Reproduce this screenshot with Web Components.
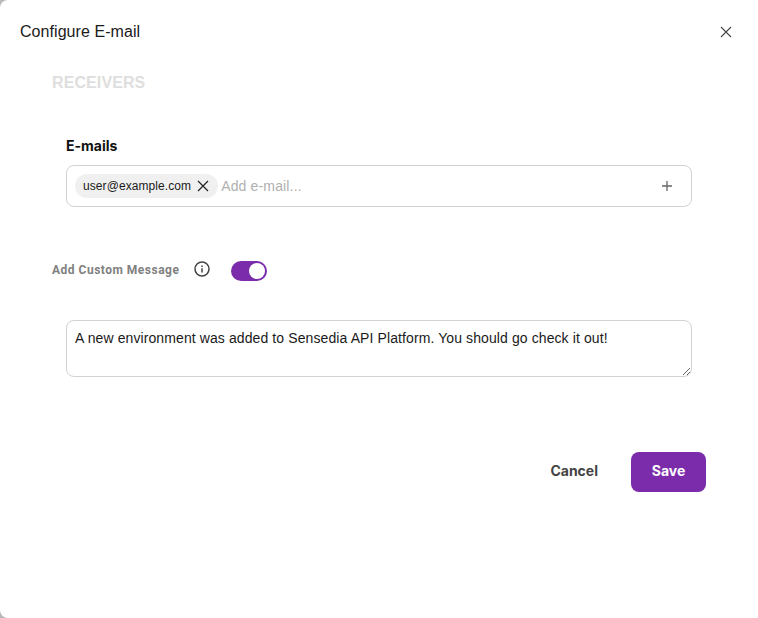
<!DOCTYPE html>
<html lang="en">
<head>
<meta charset="utf-8">
<title>Configure E-mail</title>
<style>
  html, body { margin: 0; height: 100%; overflow: hidden; background: #b9b9b9; }
  body { font-family: "Liberation Sans", Arial, sans-serif; }
</style>
</head>
<body>
<config-dialog heading="Configure E-mail">
  <section-title>RECEIVERS</section-title>
  <email-field label="E-mails" placeholder="Add e-mail...">
    <email-chip>user@example.com</email-chip>
  </email-field>
  <message-toggle label="Add Custom Message" checked></message-toggle>
  <message-box>A new environment was added to Sensedia API Platform. You should go check it out!</message-box>
  <dialog-actions></dialog-actions>
</config-dialog>

<script>
// shorthand to make a shadow root from a string
function shadow(el, html) {
  const root = el.attachShadow({ mode: 'open' });
  root.innerHTML = html;
  return root;
}

const ICON_X = (size, color, width) => `
  <svg width="${size}" height="${size}" viewBox="0 0 12 12" fill="none" stroke="${color}" stroke-width="${width}">
    <path d="M1 1 11 11M11 1 1 11"/>
  </svg>`;

class ConfigDialog extends HTMLElement {
  connectedCallback() {
    shadow(this, `
      <style>
        :host {
          display: block;
          height: 618px;
          background: #fff;
          border-radius: 8px 0 0 8px;
          box-sizing: border-box;
          color: #1a1a1a;
        }
        header {
          display: flex;
          justify-content: space-between;
          align-items: center;
          height: 18px;
          padding: 23px 26px 0 20px;
        }
        h1 {
          margin: 0;
          font: 400 16px/18px "Liberation Sans", Arial, sans-serif;
          letter-spacing: 0.06px;
        }
        button {
          display: flex;
          padding: 0;
          border: 0;
          background: none;
        }
        main { padding: 33px 0 0 52px; width: 654px; }
      </style>
      <header>
        <h1>${this.getAttribute('heading')}</h1>
        <button aria-label="Close">${ICON_X(12, '#444', 1.1)}</button>
      </header>
      <main><slot></slot></main>
    `);
  }
}

class SectionTitle extends HTMLElement {
  connectedCallback() {
    shadow(this, `
      <style>
        :host {
          display: block;
          font: 700 16px/18px "Liberation Sans", Arial, sans-serif;
          letter-spacing: 0.1px;
          color: #dedede;
        }
      </style>
      <slot></slot>
    `);
  }
}

class EmailChip extends HTMLElement {
  connectedCallback() {
    shadow(this, `
      <style>
        :host {
          display: inline-flex;
          align-items: center;
          gap: 6px;
          height: 24px;
          padding: 0 9px 0 8px;
          border-radius: 12px;
          background: #f0f0f0;
          font: 400 12px "Liberation Sans", Arial, sans-serif;
          letter-spacing: 0.08px;
          color: #1a1a1a;
        }
        svg { display: block; }
      </style>
      <slot></slot>
      ${ICON_X(12, '#222', 1.2)}
    `);
  }
}

class EmailField extends HTMLElement {
  connectedCallback() {
    shadow(this, `
      <style>
        :host {
          display: block;
          margin: 46px 14px 0 14px;
        }
        label {
          display: block;
          margin-bottom: 11px;
          font: 700 14px/16px Inter, "Liberation Sans", sans-serif;
          color: #111;
        }
        .box {
          display: flex;
          align-items: center;
          height: 42px;
          box-sizing: border-box;
          padding: 0 19px 0 8px;
          border: 1px solid #d2d2d2;
          border-radius: 8px;
        }
        input {
          flex: 1;
          min-width: 0;
          margin-left: 3px;
          padding: 0;
          border: 0;
          outline: 0;
          font: 400 14px "Liberation Sans", Arial, sans-serif;
          letter-spacing: 0.15px;
          color: #1a1a1a;
        }
        input::placeholder { color: #b0b0b0; opacity: 1; }
        svg { display: block; }
      </style>
      <label>${this.getAttribute('label')}</label>
      <div class="box">
        <slot></slot>
        <input placeholder="${this.getAttribute('placeholder')}">
        <svg width="10" height="10" viewBox="0 0 10 10" stroke="#666" stroke-width="1.3" fill="none">
          <path d="M5 0V10M0 5H10"/>
        </svg>
      </div>
    `);
  }
}

class MessageToggle extends HTMLElement {
  connectedCallback() {
    shadow(this, `
      <style>
        :host {
          display: flex;
          align-items: center;
          margin-top: 53px;
          height: 22px;
        }
        span.text {
          margin-top: -2px;
          font: 700 12px/14px Roboto, "Liberation Sans", sans-serif;
          letter-spacing: 0.5px;
          color: #808080;
        }
        svg { display: block; margin: -4px 0 0 15px; }
        .switch {
          position: relative;
          width: 36px;
          height: 20px;
          margin-left: 21px;
          border-radius: 10px;
          background: #7b2cab;
        }
        .knob {
          position: absolute;
          top: 2px;
          right: 2px;
          width: 16px;
          height: 16px;
          border-radius: 50%;
          background: #fff;
        }
      </style>
      <span class="text">${this.getAttribute('label')}</span>
      <svg width="16" height="16" viewBox="0 0 16 16" fill="none" stroke="#444" stroke-width="1.5">
        <circle cx="8" cy="8" r="7"/>
        <path d="M8 7.2V11.6"/>
        <path d="M8 4.4V5.9"/>
      </svg>
      <div class="switch" role="switch" aria-checked="true"><div class="knob"></div></div>
    `);
  }
}

class MessageBox extends HTMLElement {
  connectedCallback() {
    const text = this.textContent;
    shadow(this, `
      <style>
        :host {
          display: block;
          margin: 38px 14px 0 14px;
        }
        textarea {
          display: block;
          width: 100%;
          height: 57px;
          box-sizing: border-box;
          padding: 9px 8px;
          border: 1px solid #d2d2d2;
          border-radius: 8px;
          outline: 0;
          font: 400 14px/16px "Liberation Sans", Arial, sans-serif;
          letter-spacing: 0.1px;
          color: #1a1a1a;
        }
      </style>
      <textarea></textarea>
    `).querySelector('textarea').value = text;
  }
}

class DialogActions extends HTMLElement {
  connectedCallback() {
    shadow(this, `
      <style>
        :host {
          display: flex;
          justify-content: flex-end;
          align-items: center;
          gap: 33px;
          margin-top: 75px;
        }
        button {
          height: 40px;
          padding: 0 0 3px;
          border: 0;
          background: none;
          font: 700 14px Inter, "Liberation Sans", sans-serif;
          color: #444;
        }
        .save {
          width: 75px;
          border-radius: 8px;
          background: #7b2cab;
          color: #fff;
        }
      </style>
      <button>Cancel</button>
      <button class="save">Save</button>
    `);
  }
}

customElements.define('config-dialog', ConfigDialog);
customElements.define('section-title', SectionTitle);
customElements.define('email-chip', EmailChip);
customElements.define('email-field', EmailField);
customElements.define('message-toggle', MessageToggle);
customElements.define('message-box', MessageBox);
customElements.define('dialog-actions', DialogActions);
</script>
</body>
</html>
